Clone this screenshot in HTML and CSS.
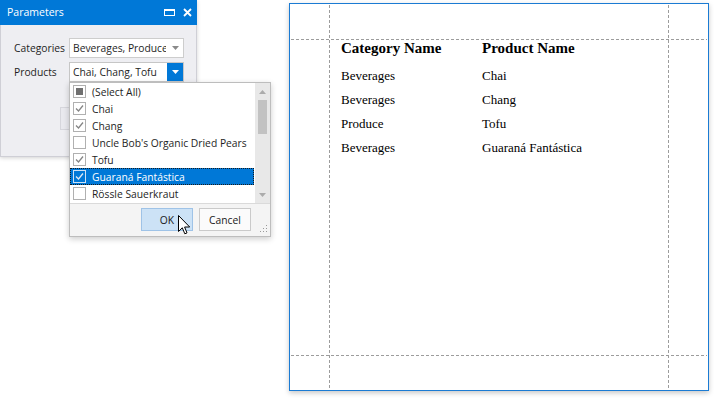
FILE: index.html
```html
<!DOCTYPE html>
<html lang="en">
<head>
<meta charset="utf-8">
<title>Parameters</title>
<link rel="stylesheet" href="styles.css">
</head>
<body>
<div class="desktop">
  <section class="params">
    <header class="titlebar">
      <span class="title">Parameters</span>
      <span class="tb-icons">
        <svg class="tb-max" width="11" height="7" viewBox="0 0 11 7"><rect x="0.5" y="0.5" width="10" height="6" fill="none" stroke="#fff" stroke-width="1"/><rect x="0" y="0" width="11" height="2" fill="#fff"/></svg>
        <svg class="tb-close" width="9" height="9" viewBox="0 0 9 9"><path d="M1 1 L8 8 M8 1 L1 8" stroke="#fff" stroke-width="1.8" fill="none"/></svg>
      </span>
    </header>
    <div class="params-body">
      <div class="field">
        <span class="field-label">Categories</span>
        <div class="combo">
          <span class="combo-text">Beverages, Produce</span>
          <span class="combo-arrow"><svg width="7" height="4" viewBox="0 0 7 4"><path d="M0 0 H7 L3.5 4 Z" fill="#8a8a8a"/></svg></span>
        </div>
      </div>
      <div class="field">
        <span class="field-label">Products</span>
        <div class="combo combo-open">
          <span class="combo-text">Chai, Chang, Tofu</span>
          <span class="combo-btn"><svg width="7" height="4" viewBox="0 0 7 4"><path d="M0 0 H7 L3.5 4 Z" fill="#fff"/></svg></span>
        </div>
      </div>
      <div class="submit-row"><span class="submit-btn"></span></div>
    </div>
  </section>

  <section class="page">
    <div class="report">
      <div class="rpt-head">Category Name</div>
      <div class="rpt-head">Product Name</div>
      <div class="rpt-cell">Beverages</div><div class="rpt-cell">Chai</div>
      <div class="rpt-cell">Beverages</div><div class="rpt-cell">Chang</div>
      <div class="rpt-cell">Produce</div><div class="rpt-cell">Tofu</div>
      <div class="rpt-cell">Beverages</div><div class="rpt-cell">Guaraná Fantástica</div>
    </div>
  </section>
</div>

<div class="popup">
  <div class="list-area">
    <ul class="items">
      <li class="item"><span class="cb cb-ind"><span class="cb-fill"></span></span><span class="item-text">(Select All)</span></li>
      <li class="item"><span class="cb"><svg width="11" height="11" viewBox="0 0 11 11"><path d="M2 5.5 L4.5 8 L9 2.5" fill="none" stroke="#858585" stroke-width="1.3"/></svg></span><span class="item-text">Chai</span></li>
      <li class="item"><span class="cb"><svg width="11" height="11" viewBox="0 0 11 11"><path d="M2 5.5 L4.5 8 L9 2.5" fill="none" stroke="#858585" stroke-width="1.3"/></svg></span><span class="item-text">Chang</span></li>
      <li class="item"><span class="cb"></span><span class="item-text">Uncle Bob's Organic Dried Pears</span></li>
      <li class="item"><span class="cb"><svg width="11" height="11" viewBox="0 0 11 11"><path d="M2 5.5 L4.5 8 L9 2.5" fill="none" stroke="#858585" stroke-width="1.3"/></svg></span><span class="item-text">Tofu</span></li>
      <li class="item item-sel"><span class="cb"><svg width="11" height="11" viewBox="0 0 11 11"><path d="M2 5.5 L4.5 8 L9 2.5" fill="none" stroke="#dfe9f3" stroke-width="1.3"/></svg></span><span class="item-text">Guaraná Fantástica</span></li>
      <li class="item"><span class="cb"></span><span class="item-text">Rössle Sauerkraut</span></li>
    </ul>
    <div class="scrollbar">
      <span class="sb-btn"><svg width="7" height="4" viewBox="0 0 7 4"><path d="M0 4 H7 L3.5 0 Z" fill="#ababab"/></svg></span>
      <span class="sb-thumb"></span>
      <span class="sb-track"></span>
      <span class="sb-btn"><svg width="7" height="4" viewBox="0 0 7 4"><path d="M0 0 H7 L3.5 4 Z" fill="#ababab"/></svg></span>
    </div>
  </div>
  <div class="popup-footer">
    <span class="btn btn-ok">OK</span>
    <span class="btn">Cancel</span>
    <svg class="grip" width="9" height="9" viewBox="0 0 9 9" fill="#9a9a9a"><rect x="7" y="1" width="1" height="1"/><rect x="7" y="4" width="1" height="1"/><rect x="4" y="4" width="1" height="1"/><rect x="7" y="7" width="1" height="1"/><rect x="4" y="7" width="1" height="1"/><rect x="1" y="7" width="1" height="1"/></svg>
  </div>
</div>

<svg class="cursor" width="13" height="21" viewBox="0 0 13 21"><path d="M0.5 0.5 L0.5 16.5 L4.3 12.8 L6.8 18.8 L9 17.9 L6.6 12 L11.7 12 Z" fill="#fff" stroke="#000" stroke-width="1" stroke-linejoin="miter"/></svg>
</body>
</html>
```

FILE: styles.css
```css
* { box-sizing: border-box; }

html, body {
  margin: 0;
  padding: 0;
}

body {
  width: 714px;
  height: 398px;
  position: relative;
  overflow: hidden;
  background: #ffffff;
  font-family: "Open Sans", "Noto Sans", sans-serif;
  font-size: 10.3px;
  color: #1e1e1e;
}

.desktop {
  display: flex;
  align-items: flex-start;
}

/* Parameters panel */
.params {
  width: 197px;
  height: 157px;
  flex: none;
  background: #eeeef2;
  border: 1px solid #cfcfd6;
  border-top: none;
  box-shadow: 0 1px 4px rgba(0, 0, 0, 0.18);
  display: flex;
  flex-direction: column;
}

.titlebar {
  height: 25px;
  margin: 0 -1px;
  background: #0078d7;
  color: #ffffff;
  display: flex;
  align-items: center;
  padding: 0 5px 1px 7px;
  font-size: 10.5px;
}

.title { flex: 1; }

.tb-icons {
  display: flex;
  align-items: center;
  gap: 8px;
}

.tb-max { margin-top: 1px; }

.params-body {
  padding: 13px 12px 0 13px;
  display: flex;
  flex-direction: column;
  gap: 4px;
}

.field {
  display: flex;
  align-items: center;
  height: 20px;
}

.field-label {
  width: 55px;
  flex: none;
}

.combo {
  width: 115px;
  height: 20px;
  background: #ffffff;
  border: 1px solid #cdcdcd;
  display: flex;
  align-items: center;
  overflow: hidden;
}

.combo-text {
  flex: 1;
  padding-left: 3px;
  white-space: nowrap;
  overflow: hidden;
}

.combo-arrow {
  width: 17px;
  flex: none;
  display: flex;
  justify-content: center;
  align-items: center;
  padding-left: 1px;
}

.combo-open { border-color: #c6c6c6; }

.combo-btn {
  width: 17px;
  height: 20px;
  margin-right: -1px;
  flex: none;
  background: #0078d7;
  display: flex;
  justify-content: center;
  align-items: center;
}

.submit-row {
  margin-top: 21px;
  padding-left: 46px;
}

.submit-btn {
  display: block;
  width: 75px;
  height: 23px;
  border: 1px solid #d6d6dc;
  background: #e9e9ee;
}

/* Report page */
.page {
  position: relative;
  margin: 3px 0 0 92px;
  width: 420px;
  height: 388px;
  flex: none;
  background: #ffffff;
  border: 1px solid #1b7bd3;
  box-shadow: 0 2px 5px rgba(0, 0, 0, 0.22);
}

.page::before {
  content: "";
  position: absolute;
  left: 1px;
  right: 1px;
  top: 35px;
  height: 317px;
  background-image:
    repeating-linear-gradient(90deg, #9c9c9c 0 3px, transparent 3px 5px),
    repeating-linear-gradient(90deg, #9c9c9c 0 3px, transparent 3px 5px);
  background-size: 100% 1px, 100% 1px;
  background-position: 0 0, 0 100%;
  background-repeat: no-repeat;
}

.page::after {
  content: "";
  position: absolute;
  top: 1px;
  bottom: 1px;
  left: 39px;
  width: 340px;
  background-image:
    repeating-linear-gradient(180deg, #9c9c9c 0 3px, transparent 3px 5px),
    repeating-linear-gradient(180deg, #9c9c9c 0 3px, transparent 3px 5px);
  background-size: 1px 100%, 1px 100%;
  background-position: 0 0, 100% 0;
  background-repeat: no-repeat;
}

.report {
  position: relative;
  z-index: 1;
  padding: 36px 0 0 51px;
  display: grid;
  grid-template-columns: 141px auto;
  font-family: "Liberation Serif", "Times New Roman", serif;
  color: #000;
}

.rpt-head {
  font-weight: bold;
  font-size: 15px;
  line-height: 17px;
  margin-bottom: 7px;
}

.rpt-cell {
  font-size: 13px;
  line-height: 24px;
}

/* Dropdown popup */
.popup {
  position: absolute;
  left: 69px;
  top: 82px;
  width: 202px;
  height: 155px;
  background: #ffffff;
  border: 1px solid #bdbdbd;
  box-shadow: 0 2px 6px rgba(0, 0, 0, 0.2);
  display: flex;
  flex-direction: column;
}

.list-area {
  height: 120px;
  display: flex;
}

.items {
  list-style: none;
  margin: 0;
  padding: 0;
  width: 185px;
}

.item {
  height: 17px;
  display: flex;
  align-items: center;
  padding-left: 2px;
  border: 1px solid transparent;
  white-space: nowrap;
}

.item-text {
  line-height: 14px;
}

.item-sel {
  background: #0078d7;
  color: #ffffff;
  border: 1px dotted #1a1a1a;
  margin-right: 1px;
}

.cb {
  width: 13px;
  height: 13px;
  flex: none;
  margin-right: 6px;
  border: 1px solid #b0b0b0;
  background: #ffffff;
  display: flex;
  align-items: center;
  justify-content: center;
}

.item-sel .cb {
  background: transparent;
  border-color: #cfe2f5;
}

.cb-fill {
  width: 7px;
  height: 7px;
  background: #707070;
}

.scrollbar {
  width: 15px;
  background: #e8e8e8;
  display: flex;
  flex-direction: column;
  align-items: center;
}

.sb-btn {
  height: 17px;
  width: 15px;
  flex: none;
  display: flex;
  align-items: center;
  justify-content: center;
}

.sb-thumb {
  width: 9px;
  height: 34px;
  flex: none;
  background: #c2c2c2;
}

.sb-track { flex: 1; }

.popup-footer {
  flex: 1;
  border-top: 1px solid #dadada;
  background: #f4f4f4;
  display: flex;
  align-items: flex-start;
  justify-content: flex-end;
  padding: 4px 2px 0 0;
}

.btn {
  width: 52px;
  height: 23px;
  display: flex;
  align-items: center;
  justify-content: center;
  border: 1px solid #cacaca;
  background: #fbfbfb;
  color: #202020;
  margin-left: 6px;
}

.btn-ok {
  background: #cce2f6;
  border-color: #9fc3e7;
}

.grip {
  align-self: flex-end;
  margin: 0 0 3px 8px;
}

.cursor {
  position: absolute;
  left: 178px;
  top: 215px;
}
```
